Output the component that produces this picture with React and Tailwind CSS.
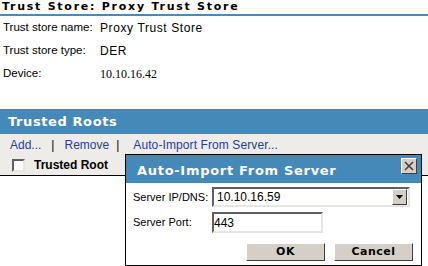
const sans = "font-['Liberation_Sans',Arial,sans-serif]";
const heavy = "font-['DejaVu_Sans',Verdana,sans-serif] font-bold";

function InfoRow({ label, value, serif }) {
  return (
    <div className="flex h-[23px] items-center whitespace-nowrap">
      <span className="w-[100px] shrink-0 pl-[3px] text-[11.5px] text-black">{label}</span>
      <span
        className={
          serif
            ? "font-['Liberation_Serif','Times_New_Roman',serif] text-[12px] text-black"
            : "text-[12px] tracking-[0.6px] text-black"
        }
      >
        {value}
      </span>
    </div>
  );
}

function Bevel({ className = "", children }) {
  // raised win-classic button face
  return (
    <div
      className={
        "flex items-center justify-center border border-t-white border-l-white border-r-[#404040] border-b-[#404040] bg-[#d4d0c8] " +
        className
      }
    >
      {children}
    </div>
  );
}

function AutoImportDialog() {
  return (
    <div className="absolute left-[125px] top-[154px] flex h-[112px] w-[297px] flex-col border border-black bg-white">
      <div className="flex h-[28px] items-start justify-between bg-[#4589b8] pl-[11px] pr-[4px]">
        <span className={`${heavy} self-center pt-[2px] text-[13px] leading-none tracking-[0.7px] text-white`}>
          Auto-Import From Server
        </span>
        <Bevel className="mt-[3px] h-[16px] w-[16px]">
          <svg width="10" height="10" viewBox="0 0 10 10">
            <path d="M1 1 L9 9 M9 1 L1 9" stroke="#404040" strokeWidth="1.6" />
          </svg>
        </Bevel>
      </div>

      <div className="flex flex-col pl-[7px] pt-[4px]">
        <div className="flex h-[20px] items-center">
          <span className="w-[79px] text-[11px] text-black">Server IP/DNS:</span>
          <div className="flex h-[20px] w-[198px] items-center justify-between border-2 border-t-[#606060] border-l-[#606060] border-r-[#e8e6e2] border-b-[#e8e6e2] bg-white">
            <span className="pl-[3px] text-[12px] text-black">10.10.16.59</span>
            <Bevel className="mr-[1px] h-[16px] w-[15px]">
              <svg width="7" height="4" viewBox="0 0 7 4">
                <path d="M0 0 H7 L3.5 4 Z" fill="#000" />
              </svg>
            </Bevel>
          </div>
        </div>

        <div className="mt-[5px] flex h-[21px] items-center">
          <span className="w-[79px] text-[11px] text-black">Server Port:</span>
          <div className="flex h-[21px] w-[111px] items-center border-2 border-t-[#606060] border-l-[#606060] border-r-[#e8e6e2] border-b-[#e8e6e2] bg-white">
            <span className="text-[12px] text-black">443</span>
          </div>
        </div>

        <div className="mt-[10px] flex justify-end gap-[9px] pr-[8px]">
          <Bevel className="h-[18px] w-[79px]">
            <span className={`${heavy} text-[11px] tracking-[0.5px] text-black`}>OK</span>
          </Bevel>
          <Bevel className="h-[18px] w-[79px]">
            <span className={`${heavy} text-[11px] tracking-[0.5px] text-black`}>Cancel</span>
          </Bevel>
        </div>
      </div>
    </div>
  );
}

export default function App() {
  return (
    <div className={`relative h-[266px] w-[428px] overflow-hidden bg-white ${sans}`}>
      <div className={`${heavy} h-[14px] px-[2px] text-[11px] leading-[14px] tracking-[1.75px] text-black`}>
        Trust Store: Proxy Trust Store
      </div>
      <div className="h-[2px] bg-[#4a8ab8]" />

      <div className="h-[93px]">
        <InfoRow label="Trust store name:" value="Proxy Trust Store" />
        <InfoRow label="Trust store type:" value="DER" />
        <InfoRow label="Device:" value="10.10.16.42" serif />
      </div>

      <div className="flex h-[25px] items-center bg-[#4589b8] pl-[8px]">
        <span className={`${heavy} text-[13px] tracking-[0.6px] text-white`}>Trusted Roots</span>
      </div>

      <div className="border-b border-black bg-[#edece8]">
        <div className="flex h-[21px] items-center pl-[10px] text-[12px]">
          <span className="text-[#1f3f9f]">Add...</span>
          <span className="ml-[10px] text-black">|</span>
          <span className="ml-[10px] text-[#1f3f9f]">Remove</span>
          <span className="ml-[7px] text-black">|</span>
          <span className="ml-[14px] tracking-[0.1px] text-[#1f3f9f]">Auto-Import From Server...</span>
        </div>
        <div className="flex h-[20px] items-center pl-[12px]">
          <span className="h-[13px] w-[13px] border-2 border-t-[#606060] border-l-[#606060] border-r-[#e8e6e2] border-b-[#e8e6e2] bg-white" />
          <span className="ml-[9px] text-[12px] font-bold text-black">Trusted Root</span>
        </div>
      </div>

      <AutoImportDialog />
    </div>
  );
}
